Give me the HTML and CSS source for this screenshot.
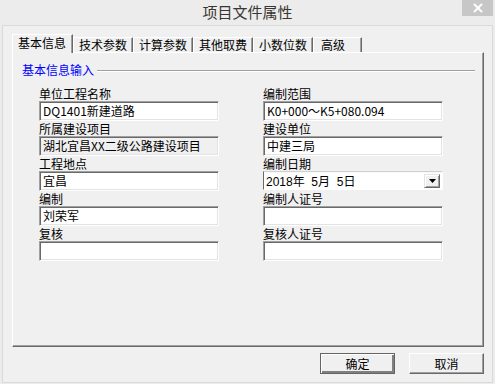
FILE: index.html
```html
<!DOCTYPE html>
<html lang="zh-CN">
  <head>
    <meta charset="utf-8" />
    <title>项目文件属性</title>
    <link rel="stylesheet" href="styles.css">
  </head>
  <body>
    <div class="window">
      <div class="titlebar">
        <span class="titlebar__text">项目文件属性</span>
        <span class="titlebar__close">
          <svg width="12" height="10" viewBox="0 0 12 10">
            <path d="M2 1 L10 9 M10 1 L2 9" stroke="#fff" stroke-width="2" fill="none" />
          </svg>
        </span>
      </div>

      <div class="client">
        <!-- tabs -->
        <div class="tabs">
          <div class="tab tab--active">基本信息</div>
          <div class="tab">技术参数</div>
          <div class="tab">计算参数</div>
          <div class="tab">其他取费</div>
          <div class="tab">小数位数</div>
          <div class="tab tab--last">高级</div>
        </div>

        <div class="panel">
          <div class="group">
            <span class="group__label">基本信息输入</span>
            <span class="group__line"></span>
          </div>

          <div class="fields">
            <div class="field">
              <div class="field__label">单位工程名称</div>
              <div class="field__input">DQ1401新建道路</div>
            </div>
            <div class="field">
              <div class="field__label">编制范围</div>
              <div class="field__input">K0+000～K5+080.094</div>
            </div>
            <div class="field">
              <div class="field__label">所属建设项目</div>
              <div class="field__input field__input--disabled">湖北宜昌XX二级公路建设项目</div>
            </div>
            <div class="field">
              <div class="field__label">建设单位</div>
              <div class="field__input">中建三局</div>
            </div>
            <div class="field">
              <div class="field__label">工程地点</div>
              <div class="field__input">宜昌</div>
            </div>
            <div class="field">
              <div class="field__label">编制日期</div>
              <div class="combo">
                <span class="combo__text">2018年&nbsp; 5月&nbsp; 5日</span>
                <span class="combo__btn">
                  <svg width="7" height="4" viewBox="0 0 7 4"><path d="M0 0 H7 L3.5 4 Z" fill="#000" /></svg>
                </span>
              </div>
            </div>
            <div class="field">
              <div class="field__label">编制</div>
              <div class="field__input">刘荣军</div>
            </div>
            <div class="field">
              <div class="field__label">编制人证号</div>
              <div class="field__input"></div>
            </div>
            <div class="field">
              <div class="field__label">复核</div>
              <div class="field__input"></div>
            </div>
            <div class="field">
              <div class="field__label">复核人证号</div>
              <div class="field__input"></div>
            </div>
          </div>
        </div>

        <div class="actions">
          <button class="btn btn--default">确定</button>
          <button class="btn">取消</button>
        </div>
      </div>
    </div>
  </body>
</html>
```

FILE: styles.css
```css
html,
body {
  margin: 0;
  padding: 0;
}
body {
  width: 495px;
  height: 384px;
  background-color: #ececec;
  font-family: "Noto Sans CJK SC", "Liberation Sans", sans-serif;
  font-size: 12px;
  color: #000;
  overflow: hidden;
}

.window {
  width: 495px;
  height: 384px;
  display: flex;
  flex-direction: column;
}

/* title bar */
.titlebar {
  position: relative;
  height: 25px;
  display: flex;
  justify-content: center;
  align-items: flex-start;
}
.titlebar__text {
  margin-top: 2px;
  font-size: 15px;
  line-height: 20px;
  color: #3a3530;
}
.titlebar__close {
  position: absolute;
  top: 0;
  right: 2px;
  width: 31px;
  height: 16px;
  background-color: #c7c7c7;
  display: flex;
  justify-content: center;
  align-items: center;
}

/* dialog body */
.client {
  margin: 0 2px 1px 2px;
  height: 358px;
  box-sizing: border-box;
  border: 1px solid #dadada;
  background-color: #f0f0f0;
  padding: 8px 8px 0 9px;
  display: flex;
  flex-direction: column;
}

.tabs {
  display: flex;
  align-items: flex-end;
  height: 18px;
  position: relative;
  z-index: 1;
}
.tab {
  height: 15px;
  box-sizing: border-box;
  padding: 0 5px;
  line-height: 14px;
  border-top: 1px solid #fff;
  border-left: 1px solid #fff;
  border-right: 1px solid #696969;
  box-shadow: inset -1px 0 #a0a0a0;
  background-color: #f0f0f0;
  white-space: nowrap;
}
.tab--active {
  height: 19px;
  margin-bottom: -1px;
  padding: 0 6px 0 5px;
  line-height: 16px;
  border-right-width: 1px;
}
.tab--last {
  padding: 0 16px 0 7px;
}

.panel {
  height: 295px;
  box-sizing: border-box;
  border-top: 1px solid #fff;
  border-left: 1px solid #fff;
  border-right: 1px solid #696969;
  border-bottom: 1px solid #696969;
  box-shadow: inset -1px -1px #a0a0a0;
  padding-top: 9px;
}

.group {
  display: flex;
  align-items: center;
  height: 15px;
  margin-left: 9px;
  margin-right: 8px;
}
.group__label {
  color: #0000ff;
  line-height: 15px;
}
.group__line {
  flex: 1;
  margin-left: 3px;
  margin-top: 2px;
  border-top: 1px solid #a0a0a0;
  border-bottom: 1px solid #fff;
}

.fields {
  display: grid;
  grid-template-columns: 180px 180px;
  column-gap: 44px;
  margin: 9px 0 0 26px;
}
.field {
  height: 35px;
}
.field__label {
  height: 15px;
  line-height: 15px;
}
.field__input {
  height: 20px;
  box-sizing: border-box;
  border-top: 1px solid #a0a0a0;
  border-left: 1px solid #a0a0a0;
  border-right: 1px solid #fff;
  border-bottom: 1px solid #fff;
  box-shadow: inset 1px 1px #696969, inset -1px -1px #e3e3e3;
  background-color: #fff;
  padding: 0 3px;
  line-height: 18px;
  white-space: nowrap;
  overflow: hidden;
}
.field__input--disabled {
  background-color: #f0f0f0;
}

.combo {
  height: 19px;
  box-sizing: border-box;
  border-top: 1px solid #d0d0d0;
  border-left: 1px solid #696969;
  border-right: 1px solid #fff;
  border-bottom: 1px solid #fff;
  box-shadow: inset 0 1px #f7f7f7;
  background-color: #fff;
  display: flex;
  align-items: center;
  justify-content: space-between;
  padding: 0 2px 0 2px;
  font-family: "DejaVu Sans", "Noto Sans CJK SC", sans-serif;
  font-size: 11px;
}
.combo__text {
  font-family: "Liberation Sans", "Noto Sans CJK SC", sans-serif;
  font-size: 12px;
}
.combo__btn {
  width: 16px;
  height: 14px;
  box-sizing: border-box;
  border-top: 1px solid #e3e3e3;
  border-left: 1px solid #e3e3e3;
  border-right: 1px solid #696969;
  border-bottom: 1px solid #696969;
  box-shadow: inset 1px 1px #fff, inset -1px -1px #a0a0a0;
  background-color: #f0f0f0;
  display: flex;
  justify-content: center;
  align-items: center;
}

.actions {
  display: flex;
  justify-content: flex-end;
  gap: 14px;
  margin-top: 6px;
}
.btn {
  width: 75px;
  height: 21px;
  box-sizing: border-box;
  margin: 0;
  padding: 0;
  font-family: "Noto Sans CJK SC", sans-serif;
  font-size: 12px;
  line-height: 17px;
  color: #000;
  background-color: #f0f0f0;
  border-top: 1px solid #fff;
  border-left: 1px solid #fff;
  border-right: 1px solid #696969;
  border-bottom: 1px solid #696969;
  box-shadow: inset -1px -1px #a0a0a0;
}
.btn--default {
  border: 1px solid #646464;
  box-shadow: inset 1px 1px #fff, inset -2px -2px #808080;
}
```
